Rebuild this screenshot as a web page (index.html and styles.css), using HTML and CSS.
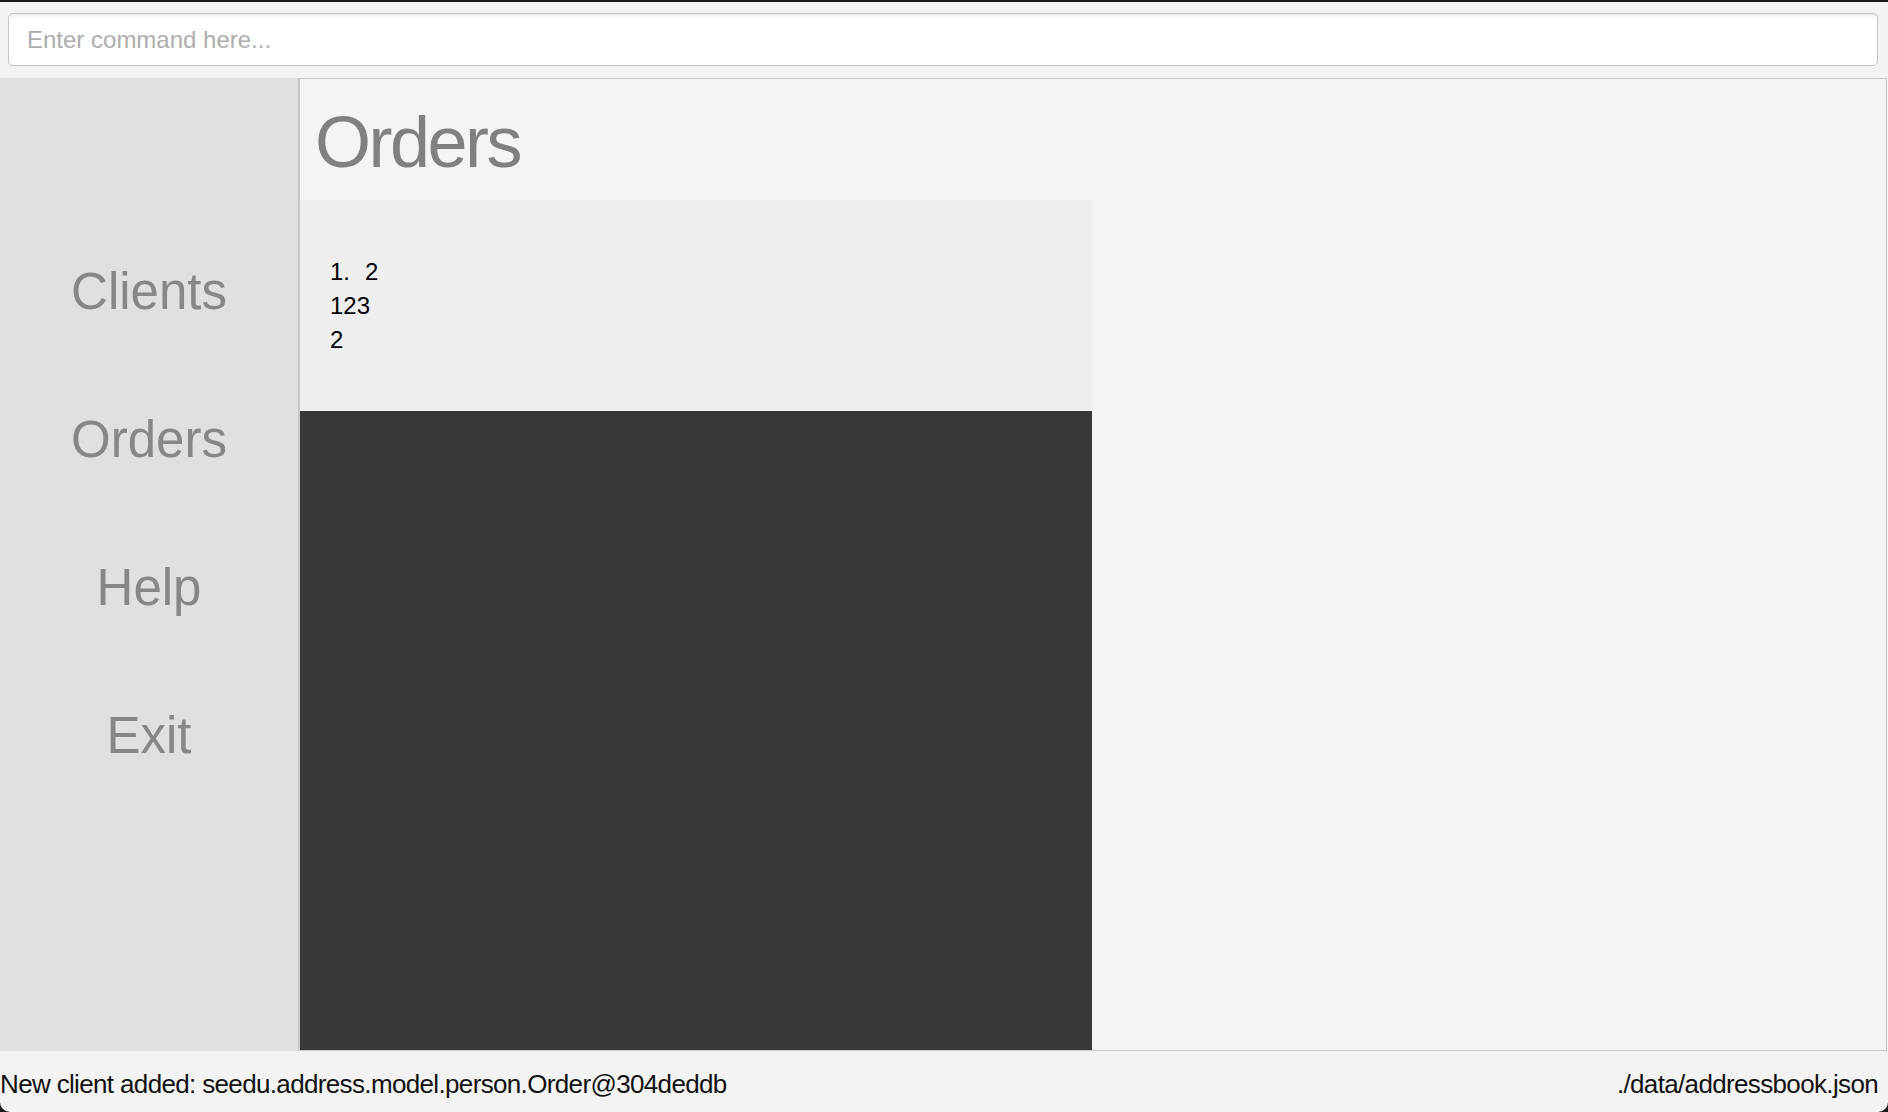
FILE: index.html
```html
<!DOCTYPE html>
<html lang="en">
<head>
<meta charset="utf-8">
<title>Orders</title>
<link rel="stylesheet" href="styles.css">
</head>
<body>
<div class="window">
  <div class="cmdbar">
    <input class="cmd" type="text" placeholder="Enter command here...">
  </div>
  <div class="main">
    <nav class="sidebar">
      <div class="nav-item">Clients</div>
      <div class="nav-item">Orders</div>
      <div class="nav-item">Help</div>
      <div class="nav-item">Exit</div>
    </nav>
    <section class="content">
      <div class="panel">
        <div class="title">Orders</div>
        <div class="cell">
          <div class="line"><span class="idx">1.</span><span>2</span></div>
          <div class="line">123</div>
          <div class="line">2</div>
        </div>
        <div class="empty"></div>
      </div>
      <div class="rest"></div>
    </section>
  </div>
  <footer class="status">
    <span class="msg">New client added: seedu.address.model.person.Order@304deddb</span>
    <span class="path">./data/addressbook.json</span>
  </footer>
</div>
</body>
</html>
```
FILE: styles.css
```css
html, body {
  margin: 0;
  padding: 0;
  height: 100%;
  background: #1c1c1c;
  overflow: hidden;
}

.window {
  margin-top: 2px;
  height: 1110px;
  background: #f3f3f3;
  display: flex;
  flex-direction: column;
  border-radius: 0 0 10px 10px;
  overflow: hidden;
  font-family: "Liberation Sans", Arial, sans-serif;
}

.cmdbar {
  height: 76px;
  box-sizing: border-box;
  padding: 11px 10px 0 8px;
  flex: none;
}

.cmd {
  display: block;
  width: 100%;
  height: 53px;
  box-sizing: border-box;
  margin: 0;
  border: 1.5px solid #c4c4c4;
  border-radius: 5px;
  background: linear-gradient(#ececec 0, #ffffff 5px, #ffffff 100%);
  padding: 0 0 0 18px;
  font-family: "Liberation Sans", Arial, sans-serif;
  font-size: 24px;
  color: #222;
  outline: none;
}

.cmd::placeholder {
  color: #adadad;
}

.main {
  flex: 1;
  display: flex;
  min-height: 0;
}

.sidebar {
  width: 298px;
  flex: none;
  background: #e0e0e0;
  box-sizing: border-box;
  padding-top: 140px;
}

.nav-item {
  text-align: center;
  font-size: 51px;
  line-height: 148px;
  height: 148px;
  color: #878787;
}

.content {
  flex: 1;
  display: flex;
  border-top: 1px solid #c8c8c8;
  border-left: 2px solid #c8c8c8;
  border-right: 1px solid #c8c8c8;
  border-bottom: 1px solid #c8c8c8;
  margin-right: 1px;
  background: #f4f4f4;
}

.panel {
  width: 792px;
  flex: none;
  display: flex;
  flex-direction: column;
}

.title {
  height: 121px;
  box-sizing: border-box;
  padding: 27px 0 0 15px;
  font-size: 72px;
  line-height: 72px;
  letter-spacing: -2.5px;
  color: #808080;
}

.cell {
  height: 211px;
  box-sizing: border-box;
  background: #eeeeee;
  padding: 55px 0 0 30px;
}

.line {
  font-size: 24px;
  line-height: 34px;
  color: #000;
}

.idx {
  display: inline-block;
  margin-right: 15px;
}

.empty {
  flex: 1;
  background: #383838;
}

.rest {
  flex: 1;
}

.status {
  height: 61px;
  flex: none;
  box-sizing: border-box;
  display: flex;
  justify-content: space-between;
  align-items: flex-start;
  padding: 18px 10px 0 0;
  font-size: 26px;
  line-height: 30px;
  letter-spacing: -0.65px;
  color: #111;
}
```
